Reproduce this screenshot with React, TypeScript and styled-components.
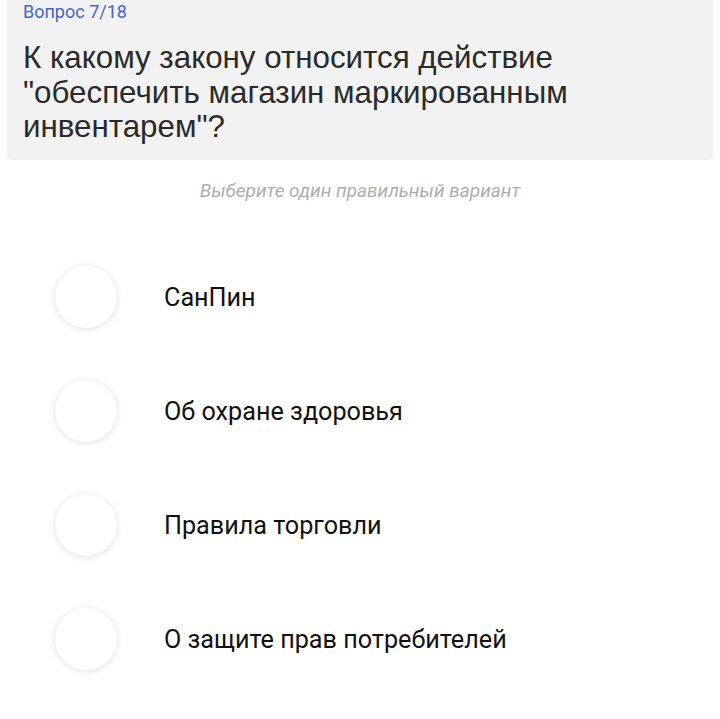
import styled, { createGlobalStyle } from 'styled-components';

const GlobalStyle = createGlobalStyle`
  html, body {
    margin: 0;
    padding: 0;
    background: #ffffff;
  }
  * {
    box-sizing: border-box;
  }
`;

const options = [
  'СанПин',
  'Об охране здоровья',
  'Правила торговли',
  'О защите прав потребителей',
];

export default function App() {
  return (
    <>
      <GlobalStyle />
      <Page>
        <QuestionCard>
          <Counter>Вопрос 7/18</Counter>
          <QuestionText>
            К какому закону относится действие "обеспечить магазин
            маркированным инвентарем"?
          </QuestionText>
        </QuestionCard>
        <Hint>Выберите один правильный вариант</Hint>
        <OptionList>
          {options.map((label) => (
            <Option key={label}>
              <Radio />
              <OptionLabel>{label}</OptionLabel>
            </Option>
          ))}
        </OptionList>
      </Page>
    </>
  );
}

const Page = styled.div`
  width: 720px;
  min-height: 719px;
  padding: 0 7px;
  display: flex;
  flex-direction: column;
`;

const QuestionCard = styled.div`
  background: #f2f2f2;
  border-radius: 0 0 4px 4px;
  padding: 0 16px 20px 16px;
  height: 160px;
`;

const Counter = styled.div`
  font-family: Roboto, sans-serif;
  font-size: 18px;
  line-height: 24px;
  color: #4666c4;
`;

const QuestionText = styled.div`
  margin-top: 17px;
  font-family: 'Liberation Sans', Arial, sans-serif;
  font-size: 31.3px;
  line-height: 34.5px;
  color: #2a2a2a;
  width: 600px;
`;

const Hint = styled.div`
  margin-top: 19px;
  text-align: center;
  font-family: Roboto, sans-serif;
  font-style: italic;
  font-size: 19px;
  line-height: 24px;
  color: #aeaeae;
`;

const OptionList = styled.div`
  margin-top: 63px;
  display: flex;
  flex-direction: column;
  gap: 52px;
`;

const Option = styled.div`
  display: flex;
  align-items: center;
  padding-left: 48px;
  gap: 47px;
  cursor: pointer;
`;

const Radio = styled.div`
  width: 62px;
  height: 62px;
  border-radius: 50%;
  background: #ffffff;
  box-shadow: 0 1px 7px rgba(0, 0, 0, 0.13);
  flex-shrink: 0;
`;

const OptionLabel = styled.div`
  font-family: Roboto, sans-serif;
  font-size: 25.2px;
  color: #111111;
`;
